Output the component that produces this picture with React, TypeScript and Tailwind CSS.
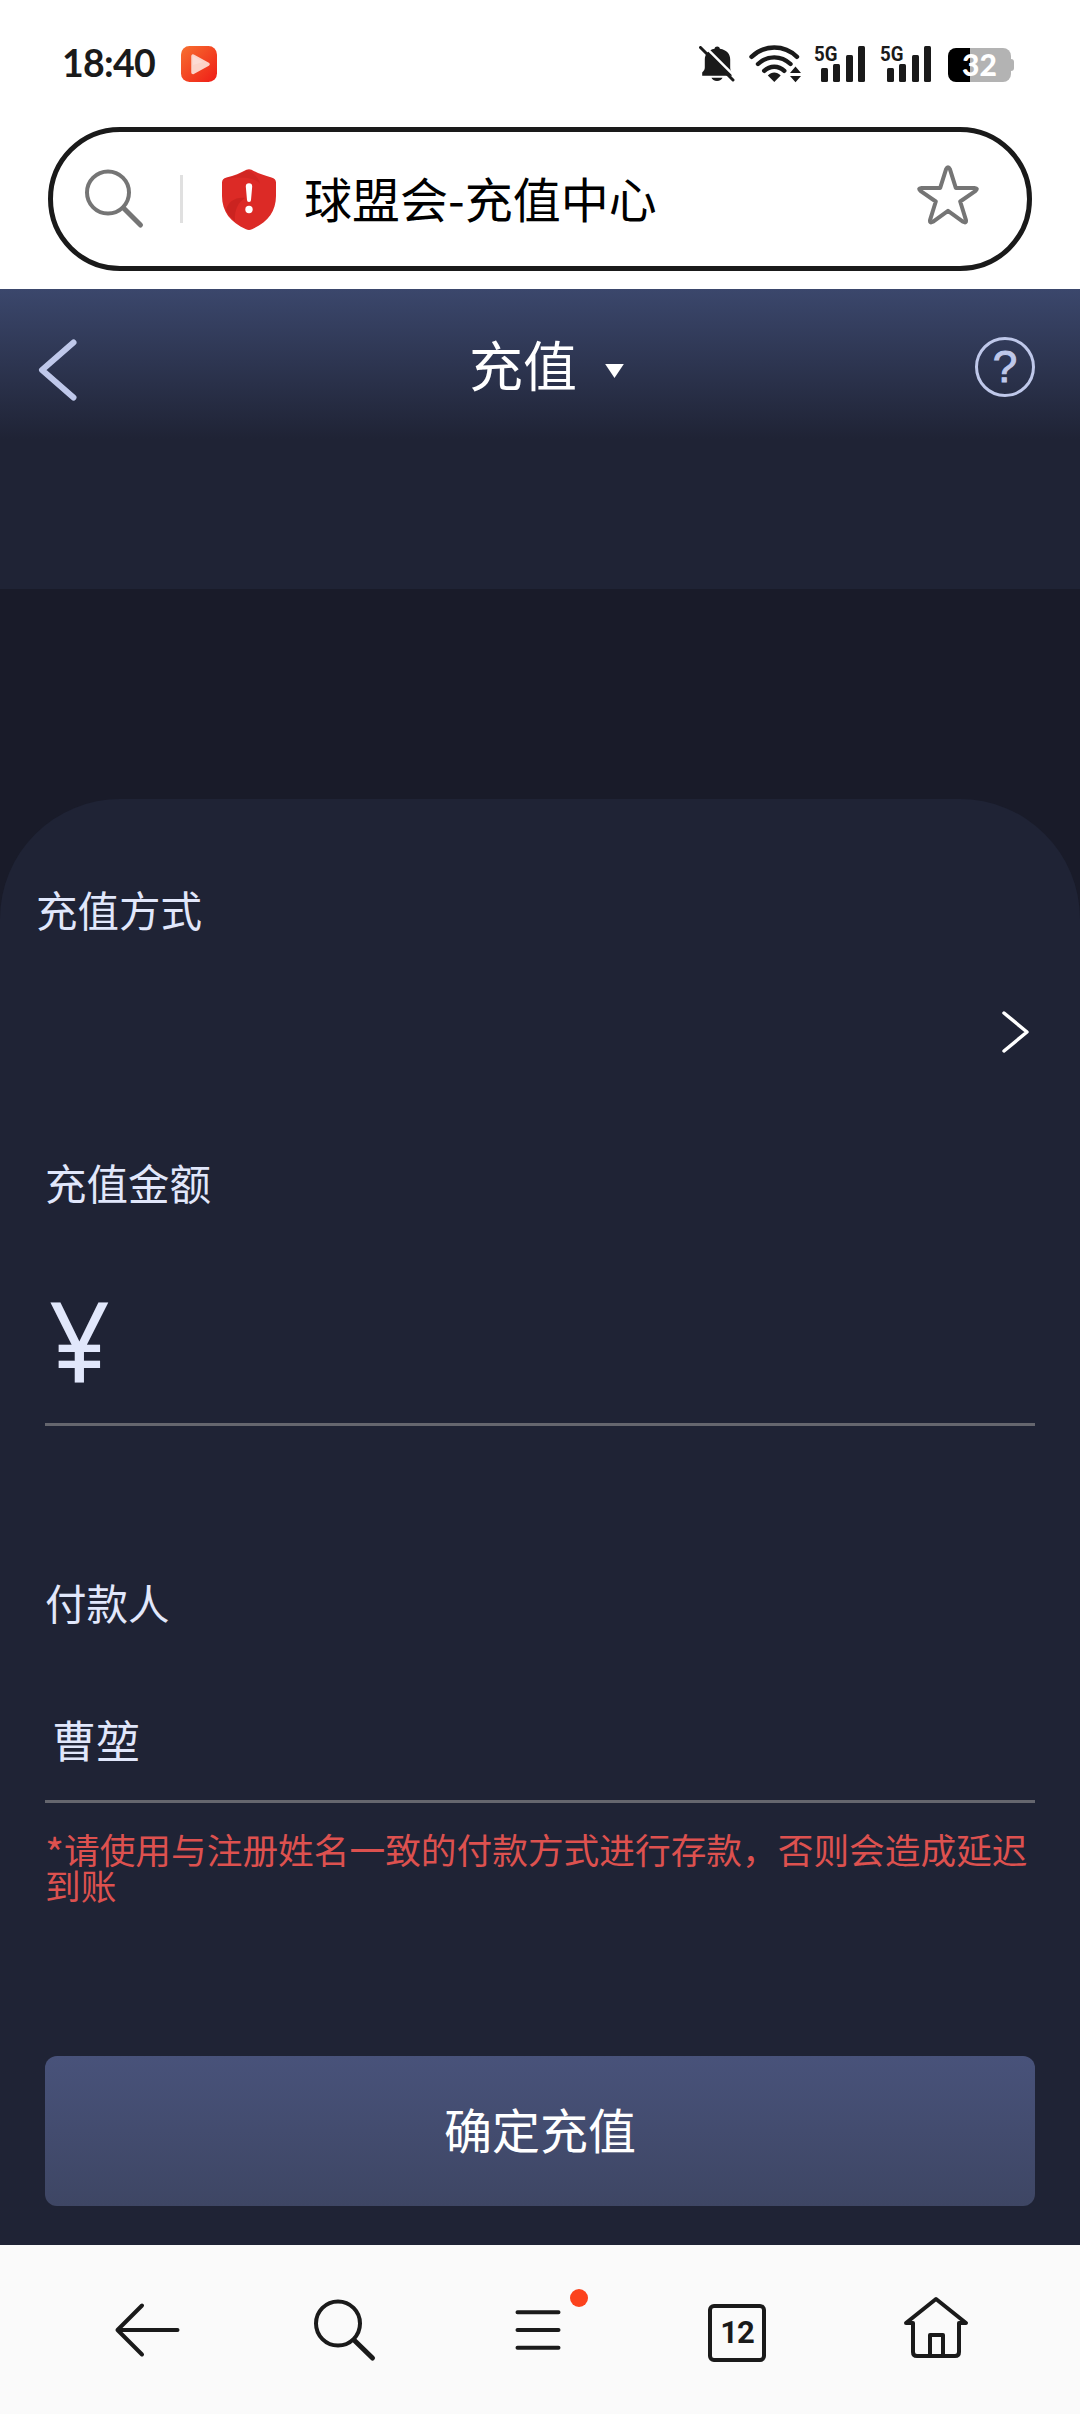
import type { ReactNode } from "react";

function MutedBell() {
  return (
    <svg width="36" height="36" viewBox="0 0 36 36" className="shrink-0">
      <path
        d="M18.2 .5c1.400 0 2.400 .8 2.700 2.200 7 1.300 10.300 5.300 10.300 10.800v8c0 2 .5 3.500 1.600 5v3.200H3.200v-3.200c1.600-1.500 2.600-3 2.600-5v-8c0-5.500 3.600-9.500 9.700-10.800 .300-1.400 1.300-2.200 2.700-2.200z"
        fill="#1a1a1a"
      />
      <path d="M12.500 31.800h11c-.6 2-2.800 3.200-5.500 3.200s-4.900-1.200-5.500-3.200z" fill="#1a1a1a" />
      <path d="M4.200 -1.200 38 32.600" stroke="#fff" strokeWidth="2.500" />
      <path d="M1.500 1.500 34 34" stroke="#1a1a1a" strokeWidth="3" strokeLinecap="round" />
    </svg>
  );
}

function Wifi() {
  return (
    <svg width="52" height="38" viewBox="0 0 52 38" className="shrink-0">
      <g fill="none" stroke="#1a1a1a" strokeWidth="4.400" strokeLinecap="round">
        <path d="M2.500 11.800c13-12.400 32.500-12.400 45.500 0" />
        <path d="M9 19c9.400-8.900 23.100-8.900 32.500 0" />
        <path d="M15.200 25.800c5.700-5.500 14.400-5.500 20.100 0" />
      </g>
      <path d="M18.800 30.500c3.700-4 9.200-4 12.900 0L25.300 37z" fill="#1a1a1a" />
      <path d="M41 28 46.500 21.500 52 28zM41 31h11L46.500 37.200z" fill="#1a1a1a" />
    </svg>
  );
}

function Signal() {
  return (
    <div className="relative h-[38px] w-[51px] shrink-0">
      <span className="absolute top-px left-0 origin-left scale-x-[0.89] font-[Roboto] text-[21px] leading-[18px] font-bold text-[#1a1a1a]">
        5G
      </span>
      <div className="flex h-full items-end justify-end gap-[5.500px]">
        <div className="h-[14px] w-[7px] rounded-[1.500px] bg-[#1a1a1a]" />
        <div className="h-[18px] w-[7px] rounded-[1.500px] bg-[#1a1a1a]" />
        <div className="h-[27px] w-[7px] rounded-[1.500px] bg-[#1a1a1a]" />
        <div className="h-[36px] w-[7px] rounded-[1.500px] bg-[#1a1a1a]" />
      </div>
    </div>
  );
}

function Battery() {
  return (
    <div className="flex shrink-0 items-center">
      <div className="flex h-[34px] w-[63px] items-center justify-center rounded-[8px] bg-[linear-gradient(90deg,#000_22px,#b3b3b3_22px)] pb-[2px]">
        <span className="font-[Lato] text-[30px] leading-[32px] font-black text-white">32</span>
      </div>
      <div className="h-[12px] w-[3px] rounded-r-[3px] bg-[#b3b3b3]" />
    </div>
  );
}

function StatusBar() {
  return (
    <div className="flex h-[127px] items-start pl-[62px]">
      <span className="mt-[42px] w-[119px] font-[Lato] text-[37.500px] leading-[42px] font-bold tracking-[-0.7px] text-[#1a1a1a]">
        18:40
      </span>
      <svg width="36" height="36" viewBox="0 0 36 36" className="mt-[46px]">
        <defs>
          <linearGradient id="play" x1="0" y1="0" x2="1" y2="1">
            <stop offset="0" stopColor="#f7702f" />
            <stop offset="1" stopColor="#ef1c17" />
          </linearGradient>
        </defs>
        <rect width="36" height="36" rx="8.500" fill="url(#play)" />
        <path d="M12 10v16.500L27 18.300z" fill="#fcd3c8" stroke="#fcd3c8" strokeWidth="3.500" strokeLinejoin="round" />
        <path d="M12 10v9l10-3z" fill="#fff" opacity=".2" />
      </svg>
      <div className="mt-[45px] ml-[482px] flex items-start">
        <div className="mt-px">
          <MutedBell />
        </div>
        <div className="ml-[14px]">
          <Wifi />
        </div>
        <div className="ml-[13px] -mt-px">
          <Signal />
        </div>
        <div className="ml-[15px] -mt-px">
          <Signal />
        </div>
        <div className="mt-[3px] ml-[17px]">
          <Battery />
        </div>
      </div>
    </div>
  );
}

function AddressBar() {
  return (
    <div className="mx-[48px] flex h-[144px] items-center rounded-full border-[5px] border-[#1a1a1a] bg-white pr-[48px] pl-[30px]">
      <svg width="62" height="62" viewBox="0 0 62 62" fill="none" stroke="#757575" className="shrink-0">
        <circle cx="25" cy="24.500" r="21" strokeWidth="4" />
        <path d="M40.500 40 57.500 57" strokeWidth="5" strokeLinecap="round" />
      </svg>
      <div className="ml-[35px] h-[48px] w-[3px] bg-[#e0e0e0]" />
      <svg width="54" height="61" viewBox="0 0 54 61" className="ml-[39px] shrink-0">
        <path
          d="M24.500 .8c1.700-.8 3.300-.8 5 0 6 3.300 12.300 5.900 20 7.600C52.300 9.100 54 10.800 54 13.500V27c0 15.500-8.500 26.500-24 33.200-2 .9-4 .9-6 0C8.500 53.500 0 42.500 0 27V13.500c0-2.700 1.700-4.400 4.500-5.100 7.700-1.700 14-4.300 20-7.600z"
          fill="#dc2a26"
        />
        <path d="M25 1c7 3 12 8 13 14-5-7-18-8-37-5 9-1.500 17-4.500 24-9z" fill="#c9231f" opacity=".55" />
        <path d="M4 41c2-8 9-13 19-12-6 4-11 11-10 23-4-3-7-7-9-11z" fill="#c0201d" opacity=".6" />
        <path d="M23.800 17.500a3.200 3.200 0 0 1 6.400 0l-1.200 13.500a2 2 0 0 1-4 0z" fill="#fff" />
        <circle cx="27" cy="40.500" r="3.700" fill="#fff" />
      </svg>
      <span className="-mt-[4px] ml-[28px] text-[48px] leading-[60px] text-black">球盟会-充值中心</span>
      <svg
        width="62"
        height="60"
        viewBox="0 0 62 60"
        fill="none"
        stroke="#757575"
        strokeWidth="4"
        strokeLinejoin="round"
        className="-mt-[8px] ml-auto shrink-0"
      >
        <path d="M29.100 4.200Q31 .2 32.900 4.200L38.800 22.900H57.500Q61.400 23.200 58.600 25.800L43.200 36.500 48.900 54.800Q49.600 58.600 46.200 56.800L31 45.800 15.800 56.800Q12.400 58.600 13.100 54.800L18.800 36.500 3.400 25.800Q.6 23.200 4.500 22.900H23.200z" />
      </svg>
    </div>
  );
}

function Header() {
  return (
    <header className="flex h-[300px] items-start bg-[linear-gradient(180deg,#3b476c_0px,#1f2335_150px)]">
      <div className="flex h-[156px] w-full items-center justify-between pr-[45px] pl-[36px]">
        <svg width="44" height="64" viewBox="0 0 44 64" className="mt-[5px]">
          <path d="M37.500 4.500 6 32 37.500 59.500" fill="none" stroke="#bfc8ea" strokeWidth="6" strokeLinecap="round" strokeLinejoin="round" />
        </svg>
        <div className="flex items-center pl-[38px]">
          <span className="-mt-[7px] text-[54px] leading-[64px] text-white">充值</span>
          <svg width="19" height="14" viewBox="0 0 20 15" className="mt-[7px] ml-[28px]">
            <path d="M0 0h20L10 15z" fill="#fff" />
          </svg>
        </div>
        <div className="flex size-[60px] items-center justify-center rounded-full border-[3px] border-[#bfc8ea] font-['Liberation_Sans'] text-[44px] leading-[52px] text-[#bfc8ea] [-webkit-text-stroke:1px_#bfc8ea]">
          ?
        </div>
      </div>
    </header>
  );
}

function Label({ children }: { children: ReactNode }) {
  return <div className="text-[41.500px] leading-[50px]">{children}</div>;
}

function RechargeForm() {
  return (
    <main className="h-[1446px] rounded-t-[120px] bg-[#1f2335] px-[45px] pt-[85px] text-[#e1e7fb]">
      <div className="-ml-[9px]">
        <Label>充值方式</Label>
      </div>
      <div className="mt-[75px] flex h-[46px] items-center justify-end pr-[4px]">
        <svg width="30" height="44" viewBox="0 0 30 44" fill="none" stroke="#fff" strokeWidth="3.500">
          <path d="M3 3 26 22 3 41" strokeLinecap="round" strokeLinejoin="round" />
        </svg>
      </div>
      <div className="mt-[102px]">
        <Label>充值金额</Label>
      </div>
      <div className="mt-[79px] flex h-[140px] items-start border-b-[3px] border-[#65666e] pl-[4px]">
        <span className="-mt-[17px] origin-left scale-x-[0.96] font-['Noto_Sans'] text-[111px] leading-[140px]">¥</span>
      </div>
      <div className="mt-[151px]">
        <Label>付款人</Label>
      </div>
      <div className="mt-[72px] flex h-[104px] items-start border-b-[3px] border-[#65666e] pt-[12px] pl-[7px] text-[44px] leading-[56px]">
        曹堃
      </div>
      <p className="mt-[28px] text-[35.700px] leading-[36px] whitespace-nowrap text-[#dd514f]">
        <span className="inline-block h-[36px] w-[19px] align-top text-[41px] leading-[41px]">*</span>
        请使用与注册姓名一致的付款方式进行存款，否则会造成延迟
        <br />
        到账
      </p>
      <button className="mt-[153px] flex h-[150px] w-full items-center justify-center rounded-[12px] bg-linear-to-b from-[#48527a] to-[#3e4664] pb-[7px] text-[48px] leading-[60px] text-white">
        确定充值
      </button>
    </main>
  );
}

function NavItem({ children }: { children: ReactNode }) {
  return <div className="flex flex-1 justify-center">{children}</div>;
}

function BottomNav() {
  return (
    <nav className="flex h-[169px] items-center bg-[#fafafa] px-[45px] pb-[2px]">
      <NavItem>
        <svg width="72" height="72" viewBox="0 0 72 72" fill="none" stroke="#1a1a1a" strokeWidth="4" strokeLinecap="round" strokeLinejoin="round">
          <path d="M69.500 37H9.500M34 12.500 9.500 37 34 61.500" />
        </svg>
      </NavItem>
      <NavItem>
        <svg width="72" height="72" viewBox="0 0 72 72" fill="none" stroke="#1a1a1a">
          <circle cx="32" cy="30.500" r="22" strokeWidth="4" />
          <path d="M48.500 47.500 66.500 65" strokeWidth="5" strokeLinecap="round" />
        </svg>
      </NavItem>
      <NavItem>
        <div className="relative">
          <svg width="72" height="72" viewBox="0 0 72 72" fill="none" stroke="#1a1a1a" strokeWidth="4" strokeLinecap="round">
            <path d="M13.500 19.300H54.500M13.500 37H54.500M13.500 54.700H54.500" />
          </svg>
          <span className="absolute top-[-4px] left-[66px] size-[18px] rounded-full bg-[#fc421c]" />
        </div>
      </NavItem>
      <NavItem>
        <div className="mt-[8px] -ml-[2px] flex size-[58px] items-center justify-center self-start rounded-[6px] border-4 border-[#1a1a1a] font-[Roboto] text-[31px] leading-[32px] font-bold tracking-[-1px] text-[#1a1a1a]">
          12
        </div>
      </NavItem>
      <NavItem>
        <svg width="72" height="72" viewBox="0 0 72 72" fill="none" stroke="#1a1a1a" strokeWidth="4" strokeLinecap="round" strokeLinejoin="round" className="-mt-px">
          <path d="M13 31H6L36 7l30 24h-7v29q0 4-4 4H17q-4 0-4-4z" />
          <path d="M30 63V43h13v20" />
        </svg>
      </NavItem>
    </nav>
  );
}

export default function App() {
  return (
    <div className="flex h-[2414px] w-[1080px] flex-col overflow-hidden bg-[#191b29] font-['Noto_Sans_CJK_SC',sans-serif]">
      <div className="h-[289px] shrink-0 bg-white">
        <StatusBar />
        <AddressBar />
      </div>
      <Header />
      <div className="h-[210px] shrink-0" />
      <RechargeForm />
      <BottomNav />
    </div>
  );
}
